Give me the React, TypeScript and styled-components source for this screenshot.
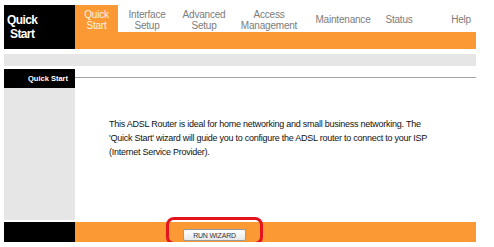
import styled, { createGlobalStyle } from "styled-components";

const Global = createGlobalStyle`
body{
    margin: 0;
    background: #ffffff;
    font-family: "Liberation Sans", Arial, sans-serif;
}
`

interface iTab{
    label: string[]
    width: number
    active?: boolean
    right?: boolean
}

const tabs: iTab[] = [
    {label: ["Quick", "Start"], width: 43, active: true},
    {label: ["Interface", "Setup"], width: 58},
    {label: ["Advanced", "Setup"], width: 56},
    {label: ["Access", "Management"], width: 74},
    {label: ["Maintenance"], width: 74},
    {label: ["Status"], width: 38},
    {label: ["Help"], width: 58, right: true},
]

const App = ()=>{
    return(
        <Page>
            <Global />
            <Header>
                <Logo>
                    <LogoText>Quick<br />Start</LogoText>
                </Logo>
                <Nav>
                    <TabRow>
                        {tabs.map((t)=>(
                            <Tab key={t.label.join(" ")} $w={t.width} $active={t.active} $right={t.right}>
                                {t.label.map((l)=>(<span key={l}>{l}</span>))}
                            </Tab>
                        ))}
                    </TabRow>
                    <OrangeBar />
                </Nav>
            </Header>
            <GrayBar />
            <Main>
                <Side>
                    <SideLabel>Quick Start</SideLabel>
                    <SideFill />
                </Side>
                <Content>
                    <Rule />
                    <Text>
                        This ADSL Router is ideal for home networking and small business networking. The<br />
                        'Quick Start' wizard will guide you to configure the ADSL router to connect to your ISP<br />
                        (Internet Service Provider).
                    </Text>
                </Content>
            </Main>
            <Footer>
                <FootLeft />
                <FootBar>
                    <WizardButton type="button">RUN WIZARD</WizardButton>
                    <Highlight />
                </FootBar>
            </Footer>
        </Page>
    )
}

export default App;

const Page = styled.div`
width: 472px;
padding: 5px 0 0 4px;
`
const Header = styled.div`
display: flex;
height: 44px;
`
const Logo = styled.div`
width: 71px;
background-color: #000;
display: flex;
align-items: center;
padding-left: 3px;
box-sizing: border-box;
`
const LogoText = styled.div`
color: #fff;
font-weight: bold;
font-size: 12px;
letter-spacing: -0.6px;
line-height: 13.5px;
text-align: center;
padding-top: 1px;
`
const Nav = styled.div`
flex: 1;
display: flex;
flex-direction: column;
`
const TabRow = styled.div`
height: 27px;
display: flex;
`
const Tab = styled.div<{$w: number; $active?: boolean; $right?: boolean}>`
width: ${(p)=>p.$w}px;
display: flex;
flex-direction: column;
justify-content: center;
align-items: ${(p)=>p.$right ? "flex-end" : "center"};
padding-right: ${(p)=>p.$right ? "5px" : "0"};
box-sizing: border-box;
background-color: ${(p)=>p.$active ? "#fb9a34" : "#fff"};
color: ${(p)=>p.$active ? "#fdf1e2" : "#7c7c7c"};
font-size: 10px;
letter-spacing: -0.2px;
line-height: 11px;
text-align: center;
padding-top: 2px;
`
const OrangeBar = styled.div`
height: 17px;
background-color: #fb9a34;
`
const GrayBar = styled.div`
height: 12px;
margin-top: 5px;
background-color: #e6e6e6;
`
const Main = styled.div`
display: flex;
height: 151px;
margin-top: 3px;
`
const Side = styled.div`
width: 71px;
display: flex;
flex-direction: column;
`
const SideLabel = styled.div`
height: 19px;
background-color: #000;
color: #fff;
font-weight: bold;
font-size: 7.5px;
display: flex;
align-items: center;
justify-content: flex-end;
padding-right: 7px;
`
const SideFill = styled.div`
flex: 1;
background-color: #e6e6e6;
`
const Content = styled.div`
flex: 1;
padding-top: 8px;
`
const Rule = styled.div`
height: 1px;
background-color: #a2a2a2;
`
const Text = styled.div`
margin: 39px 0 0 34px;
font-size: 9px;
letter-spacing: -0.25px;
line-height: 14px;
color: #111;
white-space: nowrap;
`
const Footer = styled.div`
display: flex;
height: 20px;
margin-top: 2px;
`
const FootLeft = styled.div`
width: 71px;
background-color: #000;
`
const FootBar = styled.div`
flex: 1;
position: relative;
background-color: #fb9a34;
display: flex;
align-items: flex-end;
padding: 0 0 1px 108px;
`
const WizardButton = styled.button`
width: 63px;
height: 12px;
padding: 0;
border: 1px solid #9a9a9a;
border-radius: 2px;
background: linear-gradient(#ffffff, #e8e8e8);
font-family: "Liberation Sans", Arial, sans-serif;
font-size: 7px;
letter-spacing: -0.2px;
color: #333;
`
const Highlight = styled.div`
position: absolute;
left: 91px;
top: -5px;
width: 97px;
height: 28px;
box-sizing: border-box;
border: 3px solid #e3141e;
border-radius: 8px;
`
